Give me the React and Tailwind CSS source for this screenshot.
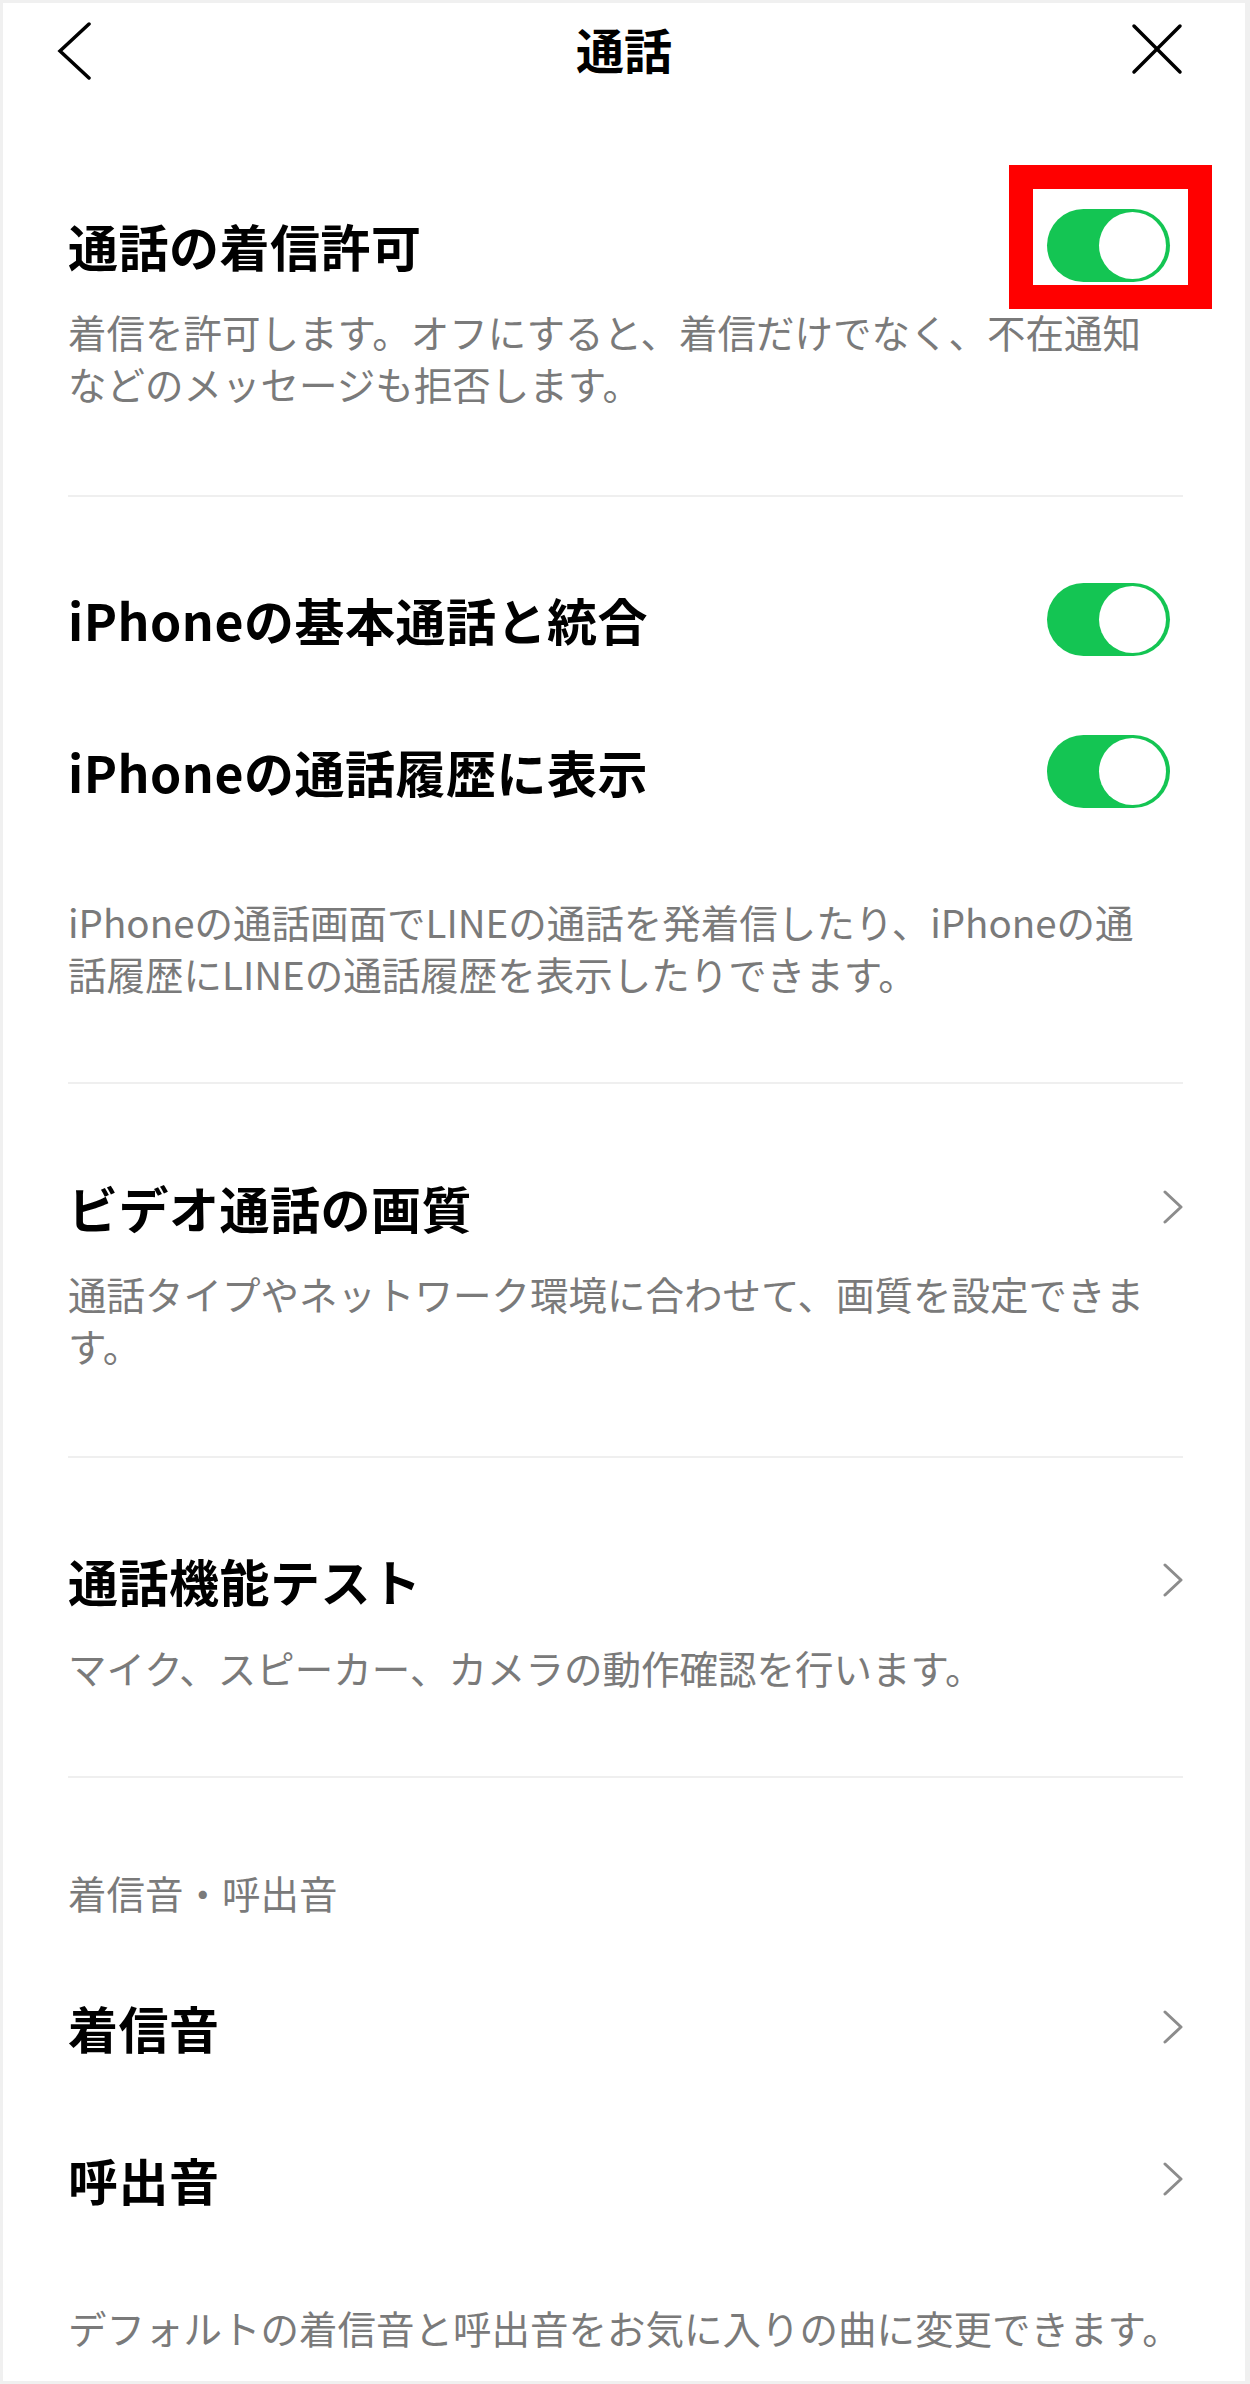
import React from 'react';

const FONT = "font-['Noto_Sans_CJK_JP','Noto_Sans',sans-serif]";

// Green iOS style switch (always on in this screen)
const Toggle = () => (
  <div className="mr-[13px] flex h-[73px] w-[123px] items-center justify-end rounded-full bg-[#14c553] pr-[4px]">
    <div className="h-[67px] w-[67px] rounded-full bg-white" />
  </div>
);

const Chevron = () => (
  <svg width="22" height="34" viewBox="0 0 22 34" fill="none" className="mr-[-1px]">
    <polyline points="3,2 19,17 3,32" stroke="#8c8c8c" strokeWidth="3" strokeLinecap="round" strokeLinejoin="round" />
  </svg>
);

const Row = ({ title, right }) => (
  <div className="flex h-[100px] items-center justify-between">
    <span className="text-[50px] font-bold leading-none tracking-[0.5px] text-black">{title}</span>
    {right}
  </div>
);

const Desc = ({ lines, className = '' }) => (
  <p className={`text-[38.5px] leading-[52px] text-[#7a7a7a] ${className}`}>
    {lines.map((l) => (
      <span key={l} className="block whitespace-nowrap">{l}</span>
    ))}
  </p>
);

const Divider = () => <div className="h-[2px] bg-[#efefef]" />;

const App = () => {
  return (
    <div className={`relative min-h-[2384px] w-[1250px] bg-[#f0f0f0] pb-[3px] pl-[3px] pr-[5px] pt-[3px] ${FONT}`}>
      <div className="min-h-[2378px] bg-white">
        {/* Header */}
        <div className="grid h-[100px] grid-cols-[1fr_auto_1fr] items-center">
          <div className="pl-[54px]">
            <svg width="36" height="58" viewBox="0 0 36 58" fill="none" className="-mt-[4px]">
              <polyline points="32,2 3,29 32,56" stroke="#000" strokeWidth="3.5" strokeLinecap="round" strokeLinejoin="miter" />
            </svg>
          </div>
          <h1 className="mb-[10px] text-[48px] font-bold leading-none text-black">通話</h1>
          <div className="flex justify-end pr-[62px]">
            <svg width="52" height="52" viewBox="0 0 52 52" fill="none" className="-mt-[8px]">
              <line x1="3" y1="3" x2="49" y2="49" stroke="#000" strokeWidth="3.5" strokeLinecap="round" />
              <line x1="49" y1="3" x2="3" y2="49" stroke="#000" strokeWidth="3.5" strokeLinecap="round" />
            </svg>
          </div>
        </div>

        <div className="pl-[65px] pr-[62px]">
          {/* 通話の着信許可 */}
          <div className="pb-[86px] pt-[92px]">
            <Row title="通話の着信許可" right={<Toggle />} />
            <Desc
              className="mt-[10px]"
              lines={['着信を許可します。オフにすると、着信だけでなく、不在通知', 'などのメッセージも拒否します。']}
            />
          </div>
          <Divider />

          {/* iPhone integration */}
          <div className="pb-[83px] pt-[72px]">
            <Row title="iPhoneの基本通話と統合" right={<Toggle />} />
            <div className="mt-[52px]">
              <Row title="iPhoneの通話履歴に表示" right={<Toggle />} />
            </div>
            <Desc
              className="mt-[74px]"
              lines={['iPhoneの通話画面でLINEの通話を発着信したり、iPhoneの通', '話履歴にLINEの通話履歴を表示したりできます。']}
            />
          </div>
          <Divider />

          {/* ビデオ通話の画質 */}
          <div className="pb-[85px] pt-[73px]">
            <Row title="ビデオ通話の画質" right={<Chevron />} />
            <Desc
              className="mt-[10px]"
              lines={['通話タイプやネットワーク環境に合わせて、画質を設定できま', 'す。']}
            />
          </div>
          <Divider />

          {/* 通話機能テスト */}
          <div className="pb-[83px] pt-[72px]">
            <Row title="通話機能テスト" right={<Chevron />} />
            <Desc className="mt-[11px]" lines={['マイク、スピーカー、カメラの動作確認を行います。']} />
          </div>
          <Divider />

          {/* 着信音・呼出音 */}
          <div className="pt-[88px]">
            <Desc lines={['着信音・呼出音']} />
            <div className="mt-[59px]">
              <Row title="着信音" right={<Chevron />} />
            </div>
            <div className="mt-[52px]">
              <Row title="呼出音" right={<Chevron />} />
            </div>
            <Desc className="mt-[72px]" lines={['デフォルトの着信音と呼出音をお気に入りの曲に変更できます。']} />
          </div>
        </div>
      </div>

      {/* red highlight annotation over the first switch */}
      <div className="pointer-events-none absolute left-[1009px] top-[165px] h-[144px] w-[203px] border-[24px] border-[#ff0000]" />
    </div>
  );
};

export default App;
